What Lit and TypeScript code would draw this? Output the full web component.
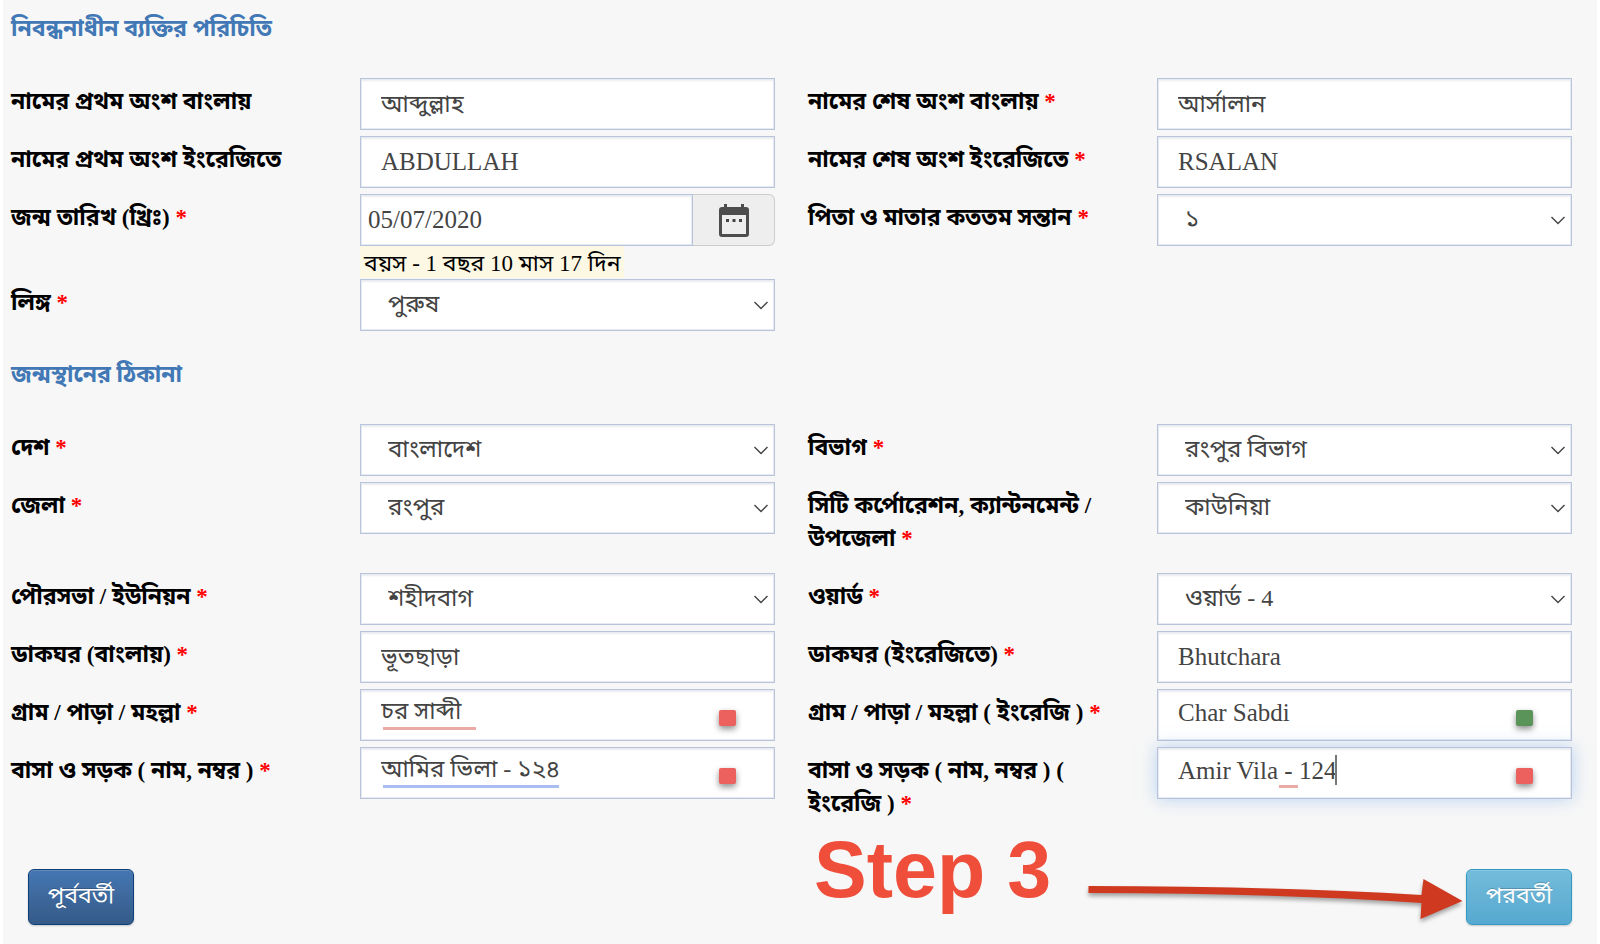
import { LitElement, html, css, nothing } from "lit";
import { customElement, property } from "lit/decorators.js";
import { styleMap } from "lit/directives/style-map.js";

type Mark = { left: number; width: number; color: string };

interface Field {
  id: string;
  label: string;
  value: string;
  kind?: "text" | "select" | "date";
  latin?: boolean;
  required?: boolean;
  note?: string;
  checker?: "red" | "green";
  marks?: Mark[];
  active?: boolean;
}

const ROSE = "#eaaaa6";
const BLUE = "#aabdf3";

const identity: (Field | null)[] = [
  { id: "first-bn", label: "নামের প্রথম অংশ বাংলায়", value: "আব্দুল্লাহ" },
  { id: "last-bn", label: "নামের শেষ অংশ বাংলায়", value: "আর্সালান", required: true },
  { id: "first-en", label: "নামের প্রথম অংশ ইংরেজিতে", value: "ABDULLAH", latin: true },
  { id: "last-en", label: "নামের শেষ অংশ ইংরেজিতে", value: "RSALAN", latin: true, required: true },
  { id: "dob", label: "জন্ম তারিখ (খ্রিঃ)", value: "05/07/2020", kind: "date", required: true, note: "বয়স - 1 বছর 10 মাস 17 দিন" },
  { id: "child-no", label: "পিতা ও মাতার কততম সন্তান", value: "১", kind: "select", required: true },
  { id: "gender", label: "লিঙ্গ", value: "পুরুষ", kind: "select", required: true },
  null,
];

const address: (Field | null)[] = [
  { id: "country", label: "দেশ", value: "বাংলাদেশ", kind: "select", required: true },
  { id: "division", label: "বিভাগ", value: "রংপুর বিভাগ", kind: "select", required: true },
  { id: "district", label: "জেলা", value: "রংপুর", kind: "select", required: true },
  { id: "upazila", label: "সিটি কর্পোরেশন, ক্যান্টনমেন্ট / উপজেলা", value: "কাউনিয়া", kind: "select", required: true },
  { id: "union", label: "পৌরসভা / ইউনিয়ন", value: "শহীদবাগ", kind: "select", required: true },
  { id: "ward", label: "ওয়ার্ড", value: "ওয়ার্ড - 4", kind: "select", required: true },
  { id: "post-bn", label: "ডাকঘর (বাংলায়)", value: "ভূতছাড়া", required: true },
  { id: "post-en", label: "ডাকঘর (ইংরেজিতে)", value: "Bhutchara", latin: true, required: true },
  { id: "village-bn", label: "গ্রাম / পাড়া / মহল্লা", value: "চর সাব্দী", required: true, checker: "red", marks: [{ left: 23, width: 93, color: ROSE }] },
  { id: "village-en", label: "গ্রাম / পাড়া / মহল্লা ( ইংরেজি )", value: "Char Sabdi", latin: true, required: true, checker: "green" },
  { id: "house-bn", label: "বাসা ও সড়ক ( নাম, নম্বর )", value: "আমির ভিলা - ১২৪", required: true, checker: "red", marks: [{ left: 23, width: 176, color: BLUE }] },
  { id: "house-en", label: "বাসা ও সড়ক ( নাম, নম্বর ) ( ইংরেজি )", value: "Amir Vila - 124", latin: true, required: true, checker: "red", marks: [{ left: 122, width: 19, color: ROSE }], active: true },
];

@customElement("form-field")
class FormField extends LitElement {
  @property({ attribute: false }) field!: Field;

  static styles = css`
    :host {
      display: grid;
      grid-template-columns: 349fr 415fr;
      align-items: start;
    }
    * { box-sizing: border-box; }
    .label {
      padding: 7px 28px 18px 0;
      font-size: 23px;
      line-height: 33px;
      color: #000;
      font-weight: 700;
    }
    .star { color: #f00; }
    .control { position: relative; display: flex; margin-bottom: 6px; }
    .flush { margin-bottom: 0; }
    .input {
      flex: 1;
      width: 100%;
      min-width: 0;
      height: 52px;
      margin: 0;
      padding: 4px 20px 0;
      border: 1px solid #b9c3d9;
      border-radius: 0;
      background: #fff;
      box-shadow: inset 0 0 0 1px #e6eaf2, inset 0 2px 2px rgba(0, 0, 0, 0.08);
      color: #444;
      font-family: inherit;
      font-size: 24px;
      line-height: 36px;
      outline: none;
      appearance: none;
    }
    .select { padding: 0 27px 2px; }
    .latin { padding-top: 0; font-size: 25px; }
    .date { padding: 0 7px; font-size: 25px; }
    .checked { padding-top: 0; padding-bottom: 4px; }
    .active {
      box-shadow: inset 0 0 0 1px #e6eaf2, inset 0 2px 2px rgba(0, 0, 0, 0.08), 0 0 16px rgba(120, 175, 235, 0.5);
    }
    .chevron {
      position: absolute;
      right: 6px;
      top: 22px;
      pointer-events: none;
    }
    .calendar {
      width: 82px;
      height: 52px;
      padding: 0;
      display: flex;
      align-items: center;
      justify-content: center;
      background: #eee;
      border: 1px solid #ccc;
      border-left: 0;
      border-radius: 0 6px 6px 0;
    }
    .note { height: 33px; line-height: 35px; font-size: 23px; color: #000; }
    .tag { display: inline-block; padding: 0 4px; background: #fcf8e3; height: 32px; }
    .mark { position: absolute; top: 38px; height: 3px; }
    .checker {
      position: absolute;
      top: 21px;
      right: 39px;
      width: 17px;
      height: 16px;
      border-radius: 2px;
      background: #ec605d;
      box-shadow: 0 3px 6px rgba(0, 0, 0, 0.45);
    }
    .green { background: #5a9459; }
    .caret { position: absolute; left: 178px; top: 8px; width: 2px; height: 30px; background: #777; }
  `;

  private control(f: Field) {
    if (f.kind === "select") {
      return html`<div class="control">
        <select class="input select" id=${f.id}><option selected>${f.value}</option></select>
        <svg class="chevron" width="16" height="9" viewBox="0 0 16 9" fill="none" stroke="#444" stroke-width="1.4"><path d="M1.5 1L8 7.6L14.5 1" /></svg>
      </div>`;
    }
    if (f.kind === "date") {
      return html`<div class="control flush">
          <input class="input date" id=${f.id} type="text" .value=${f.value} />
          <button class="calendar" type="button" aria-label="Calendar">
            <svg width="30" height="33" viewBox="0 0 30 33">
              <path fill="#4d4d4d" fill-rule="evenodd" d="M5 0H8V3H22V0H25V3H27Q30 3 30 6V30Q30 33 27 33H3Q0 33 0 30V6Q0 3 3 3H5ZM3 11V30H27V11Z" />
              <path fill="#444" d="M7 15h3v3H7zM13.500 15h3v3h-3zM20 15h3v3h-3z" />
            </svg>
          </button>
        </div>
        <div class="note"><span class="tag">${f.note}</span></div>`;
    }
    return html`<div class="control">
      <input class="input ${f.latin ? "latin" : ""} ${f.checker ? "checked" : ""} ${f.active ? "active" : ""}" id=${f.id} type="text" .value=${f.value} />
      ${(f.marks ?? []).map((m) => html`<span class="mark" style=${styleMap({ left: `${m.left}px`, width: `${m.width}px`, background: m.color })}></span>`)}
      ${f.active ? html`<span class="caret"></span>` : nothing}
      ${f.checker ? html`<span class="checker ${f.checker}"></span>` : nothing}
    </div>`;
  }

  render() {
    const f = this.field;
    return html`<label class="label" for=${f.id}>${f.label}${f.required ? html` <span class="star">*</span>` : nothing}</label>
      <div>${this.control(f)}</div>`;
  }
}

@customElement("app-root")
class AppRoot extends LitElement {
  static styles = css`
    :host {
      display: block;
      padding: 0 3px;
      background: #fff;
      font-family: "Liberation Serif", "Noto Sans Bengali", "Noto Sans", serif;
    }
    * { box-sizing: border-box; }
    .page { min-height: 100vh; padding: 12px 25px 19px 8px; background: #f7f7f7; }
    .title {
      margin: 0;
      padding-bottom: 33px;
      font-size: 23px;
      line-height: 33px;
      font-weight: 700;
      color: #4178b5;
    }
    .section + .section { padding-top: 21px; }
    .fields { display: grid; grid-template-columns: 1fr 1fr; column-gap: 33px; }
    .footer { display: grid; grid-template-columns: 1fr 1fr; column-gap: 33px; align-items: end; }
    .left { padding-left: 17px; }
    .right { display: flex; align-items: flex-end; padding-left: 6px; }
    .step {
      padding: 0 36px 23px 0;
      font: 700 79px/64px "Liberation Sans", sans-serif;
      color: #ef4e3b;
      white-space: nowrap;
    }
    .arrow { flex: 1; min-width: 0; height: 56px; overflow: visible; filter: drop-shadow(0 3px 2px rgba(0, 0, 0, 0.35)); }
    .button {
      width: 106px;
      height: 56px;
      padding: 0;
      border: 1px solid #0e3f78;
      border-radius: 6px;
      background: linear-gradient(#4577b3, #355a87);
      box-shadow: inset 0 1px 0 rgba(255, 255, 255, 0.15), 0 1px 2px rgba(0, 0, 0, 0.2);
      color: #fff;
      font-family: inherit;
      font-size: 23px;
      text-shadow: 0 -1px 0 rgba(0, 0, 0, 0.2);
    }
    .next { border-color: #2f9bc4; background: linear-gradient(#74bcdb, #56a8d0); }
  `;

  private section(title: string, fields: (Field | null)[]) {
    return html`<section class="section">
      <h2 class="title">${title}</h2>
      <div class="fields">${fields.map((f) => (f ? html`<form-field .field=${f}></form-field>` : html`<div></div>`))}</div>
    </section>`;
  }

  render() {
    return html`<form class="page" @submit=${(e: Event) => e.preventDefault()}>
      ${this.section("নিবন্ধনাধীন ব্যক্তির পরিচিতি", identity)}
      ${this.section("জন্মস্থানের ঠিকানা", address)}
      <div class="footer">
        <div class="left"><button class="button" type="button">পূর্ববর্তী</button></div>
        <div class="right">
          <span class="step">Step 3</span>
          <svg class="arrow" viewBox="0 0 376 56" aria-hidden="true">
            <path fill="#cf391f" d="M0 17Q180 17 333 26L335 10L374 32L332 50L333 34Q180 24 0 24Z" />
          </svg>
          <button class="button next" type="submit">পরবর্তী</button>
        </div>
      </div>
    </form>`;
  }
}
